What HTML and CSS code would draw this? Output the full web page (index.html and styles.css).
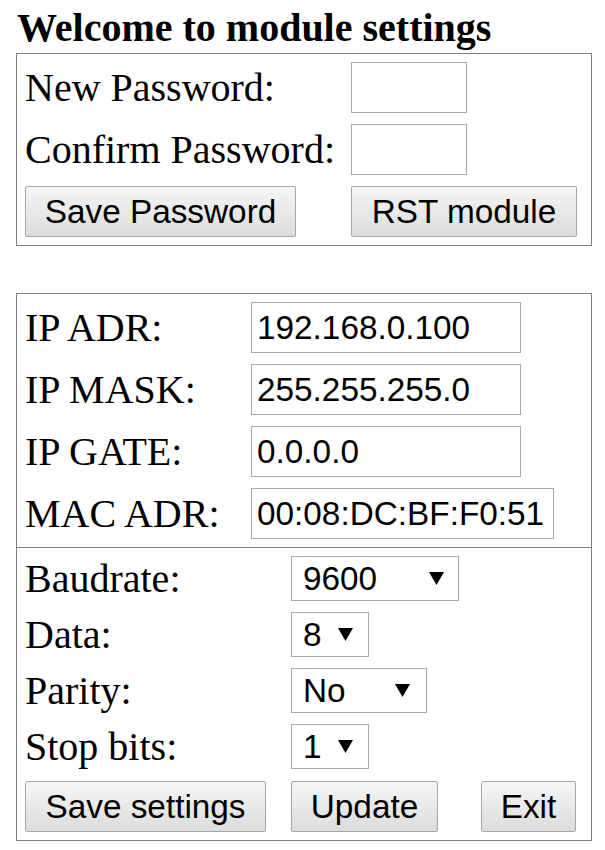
FILE: index.html
```html
<!DOCTYPE html>
<html>
<head>
<meta charset="utf-8">
<title>Module settings</title>
<link rel="stylesheet" href="styles.css">
</head>
<body>
<div class="title">Welcome to module settings</div>

<form class="panel">
  <div class="sect grid-pw">
    <label class="lbl">New Password:</label>
    <input class="in in-pw" type="password">
    <label class="lbl">Confirm Password:</label>
    <input class="in in-pw" type="password">
    <button type="button" class="btn b-savepw">Save Password</button>
    <button type="button" class="btn b-rst">RST module</button>
  </div>
</form>

<form class="panel panel-net">
  <div class="sect grid-net">
    <label class="lbl">IP ADR:</label>
    <input class="in in-ip" type="text" value="192.168.0.100">
    <label class="lbl">IP MASK:</label>
    <input class="in in-ip" type="text" value="255.255.255.0">
    <label class="lbl">IP GATE:</label>
    <input class="in in-ip" type="text" value="0.0.0.0">
    <label class="lbl">MAC ADR:</label>
    <input class="in in-mac" type="text" value="00:08:DC:BF:F0:51">
  </div>
  <div class="sect grid-serial">
    <label class="lbl">Baudrate:</label>
    <span class="sel sel-baud">
      <select><option>9600</option><option>19200</option><option>38400</option><option>57600</option><option>115200</option></select>
      <svg class="arrow" width="15" height="13" viewBox="0 0 15 13"><polygon points="0,0 15,0 7.5,13" fill="#000"/></svg>
    </span>
    <label class="lbl">Data:</label>
    <span class="sel sel-small">
      <select><option>8</option><option>7</option></select>
      <svg class="arrow" width="15" height="13" viewBox="0 0 15 13"><polygon points="0,0 15,0 7.5,13" fill="#000"/></svg>
    </span>
    <label class="lbl">Parity:</label>
    <span class="sel sel-parity">
      <select><option>No</option><option>Odd</option><option>Even</option></select>
      <svg class="arrow" width="15" height="13" viewBox="0 0 15 13"><polygon points="0,0 15,0 7.5,13" fill="#000"/></svg>
    </span>
    <label class="lbl">Stop bits:</label>
    <span class="sel sel-small">
      <select><option>1</option><option>2</option></select>
      <svg class="arrow" width="15" height="13" viewBox="0 0 15 13"><polygon points="0,0 15,0 7.5,13" fill="#000"/></svg>
    </span>
    <button type="button" class="btn b-save">Save settings</button>
    <button type="button" class="btn b-update">Update</button>
    <button type="button" class="btn b-exit">Exit</button>
  </div>
</form>
</body>
</html>
```

FILE: styles.css
```css
html, body {
  background: #fff;
}
body {
  margin: 0;
  padding: 0 0 0 16px;
  font-family: "Liberation Serif", "Times New Roman", serif;
  font-size: 40px;
  color: #000;
}
.title {
  font-weight: bold;
  font-size: 40px;
  line-height: 46px;
  margin: 5px 0 2px 1px;
  white-space: nowrap;
}
.panel {
  box-sizing: border-box;
  width: 576px;
  border: 1px solid #808080;
  margin: 0;
}
.panel-net {
  margin-top: 47px;
}
.sect {
  display: grid;
  padding: 8px;
  row-gap: 11px;
  align-items: center;
}
.sect + .sect {
  border-top: 1px solid #808080;
}
.grid-pw {
  grid-template-columns: 326px auto;
}
.grid-net {
  grid-template-columns: 226px auto;
}
.grid-serial {
  grid-template-columns: 266px 190px auto;
  grid-auto-rows: auto;
}
.grid-serial .lbl {
  grid-column: 1;
  height: 45px;
  line-height: 45px;
}
.grid-serial .sel {
  grid-column: 2 / 4;
}
.lbl {
  font-size: 40px;
  line-height: 46px;
  white-space: nowrap;
}
.in {
  box-sizing: border-box;
  height: 51px;
  margin: 0;
  padding: 0 5px;
  border: 1px solid #a9a9a9;
  background: #fff;
  font-family: "Liberation Sans", Arial, sans-serif;
  font-size: 33.33px;
  color: #000;
  outline: none;
  justify-self: start;
}
.in-pw { width: 116px; }
.in-ip { width: 270px; }
.in-mac { width: 303px; }

.sel {
  position: relative;
  display: block;
  justify-self: start;
  height: 45px;
}
.sel select {
  -webkit-appearance: none;
  appearance: none;
  display: block;
  box-sizing: border-box;
  height: 45px;
  margin: 0;
  padding: 0 0 0 11px;
  border: 1px solid #a9a9a9;
  border-radius: 0;
  background: #fff;
  font-family: "Liberation Sans", Arial, sans-serif;
  font-size: 33.33px;
  color: #000;
  outline: none;
}
.sel-baud select { width: 168px; }
.sel-small select { width: 78px; }
.sel-parity select { width: 136px; }
.arrow {
  position: absolute;
  right: 16px;
  top: 16px;
  pointer-events: none;
}
.sel-baud .arrow { right: 15px; }
.sel-parity .arrow { right: 17px; }

.btn {
  box-sizing: border-box;
  height: 51px;
  margin: 0;
  padding: 0;
  border: 1px solid #a6a6a6;
  border-radius: 2px;
  background: linear-gradient(#f6f6f6, #dcdcdc);
  font-family: "Liberation Sans", Arial, sans-serif;
  font-size: 33.33px;
  color: #000;
  text-align: center;
  justify-self: start;
  white-space: nowrap;
}
.b-savepw { width: 271px; }
.b-rst { width: 226px; }
.b-save { width: 241px; margin-top: 1px; }
.b-update { width: 147px; margin-top: 1px; }
.b-exit { width: 95px; margin-top: 1px; }
```
